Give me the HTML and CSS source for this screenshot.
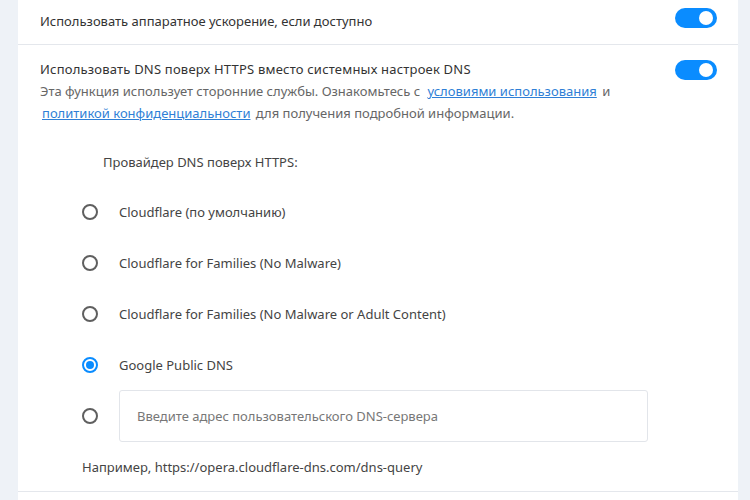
FILE: index.html
```html
<!DOCTYPE html>
<html lang="ru">
<head>
<meta charset="utf-8">
<link rel="stylesheet" href="styles.css">
</head>
<body>
<div class="page">
  <div class="card">
    <div class="row row-first">
      <div class="label">Использовать аппаратное ускорение, если доступно</div>
      <span class="toggle"><span class="knob"></span></span>
    </div>
    <div class="row row-dns">
      <div class="dns-text">
        <div class="label">Использовать DNS поверх HTTPS вместо системных настроек DNS</div>
        <div class="desc">Эта функция использует сторонние службы. Ознакомьтесь с <a href="#">условиями использования</a> и<br><a href="#">политикой конфиденциальности</a> для получения подробной информации.</div>
      </div>
      <span class="toggle"><span class="knob"></span></span>
    </div>
    <div class="provider">
      <div class="provider-title">Провайдер DNS поверх HTTPS:</div>
      <div class="options">
        <div class="option"><span class="radio"></span><span class="opt-label">Cloudflare (по умолчанию)</span></div>
        <div class="option"><span class="radio"></span><span class="opt-label">Cloudflare for Families (No Malware)</span></div>
        <div class="option"><span class="radio"></span><span class="opt-label">Cloudflare for Families (No Malware or Adult Content)</span></div>
        <div class="option"><span class="radio checked"></span><span class="opt-label">Google Public DNS</span></div>
        <div class="option option-custom"><span class="radio"></span><div class="input">Введите адрес пользовательского DNS-сервера</div></div>
      </div>
      <div class="example">Например, https://opera.cloudflare-dns.com/dns-query</div>
    </div>
  </div>
</div>
</body>
</html>
```
FILE: styles.css
```css
html, body {
  margin: 0;
  padding: 0;
}
body {
  background: #eef2f7;
  font-family: "Noto Sans", "Open Sans", sans-serif;
  font-size: 13px;
  color: #333;
  width: 750px;
  height: 500px;
  overflow: hidden;
}
.page {
  padding: 0 12px 0 18px;
}
.card {
  background: #fff;
  height: 500px;
}
.row {
  display: flex;
  justify-content: space-between;
  padding: 0 21px 0 22px;
  border-bottom: 1px solid #e4e7ec;
}
.row-first {
  height: 45px;
  align-items: center;
  padding-bottom: 4px;
  box-sizing: border-box;
}
.row-first .label {
  margin-top: 2px;
}
.row-dns {
  border-bottom: none;
  padding-top: 14px;
  align-items: flex-start;
}
.label {
  color: #333;
  line-height: 20px;
}
.row-dns .label {
  letter-spacing: 0.2px;
}
.desc {
  color: #666;
  line-height: 22px;
  margin-top: 1px;
}
.desc a {
  color: #2f7fd6;
  text-decoration: underline;
  padding: 0 2px;
}
.desc a:first-child { margin-left: 2px; }
.toggle {
  flex: none;
  width: 42px;
  height: 20px;
  border-radius: 10px;
  background: #0a8cff;
  position: relative;
  margin-top: 1px;
}
.row-first .toggle { margin-top: -4px; }
.knob {
  position: absolute;
  right: 4px;
  top: 3px;
  width: 14px;
  height: 14px;
  border-radius: 50%;
  background: #fff;
}
.provider {
  padding: 0 0 14px 64px;
  border-bottom: 1px solid #e4e7ec;
}
.provider-title {
  color: #444;
  padding: 28px 0 0 21px;
  line-height: 20px;
}
.options {
  margin-top: 30px;
  display: flex;
  flex-direction: column;
  gap: 31px;
}
.option {
  display: flex;
  align-items: center;
  height: 20px;
  color: #444;
}
.radio {
  flex: none;
  box-sizing: border-box;
  width: 16px;
  height: 16px;
  border: 2px solid #5f5f5f;
  border-radius: 50%;
  margin-right: 21px;
  position: relative;
}
.radio.checked {
  border-color: #0a8cff;
}
.radio.checked::after {
  content: "";
  position: absolute;
  left: 2px;
  top: 2px;
  width: 8px;
  height: 8px;
  border-radius: 50%;
  background: #0a8cff;
}
.option-custom {
  height: 52px;
  margin-top: -16px;
}
.input {
  box-sizing: border-box;
  width: 529px;
  height: 52px;
  border: 1px solid #e2e5ea;
  border-radius: 3px;
  padding: 0 0 0 17px;
  display: flex;
  align-items: center;
  color: #777;
}
.example {
  color: #444;
  margin-top: 15px;
  line-height: 20px;
}
```
